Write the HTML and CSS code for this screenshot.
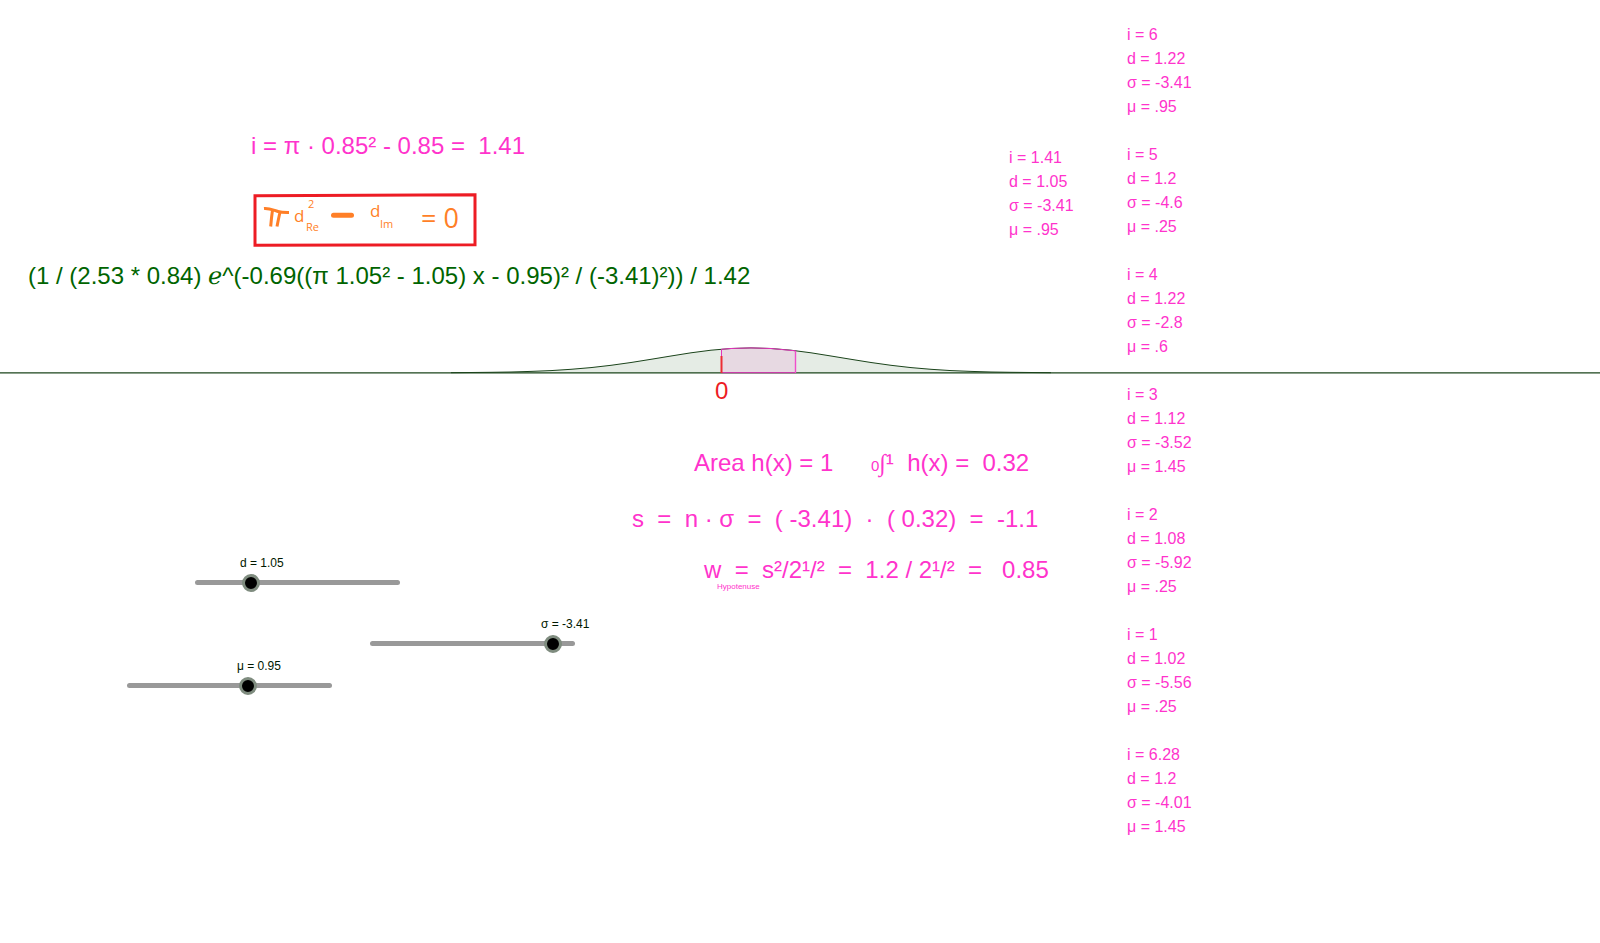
FILE: index.html
```
<!DOCTYPE html>
<html lang="en">
<head>
<meta charset="utf-8">
<title>Normal curve</title>
<link rel="stylesheet" href="styles.css">
</head>
<body>
<main class="board">
  <svg class="plot" aria-label="Bell curve h(x)">
    <path class="area" d="M451 32.7L471 32.5L491 32.3L511 32L531 31.4L551 30.6L571 29.3L591 27.6L611 25.3L631 22.5L651 19.3L671 16L691 12.8L711 10.2L731 8.5L751 7.9L771 8.5L791 10.2L811 12.8L831 16L851 19.3L871 22.5L891 25.3L911 27.6L931 29.3L951 30.6L971 31.4L991 32L1011 32.3L1031 32.5L1051 32.7"/>
    <line class="axis" x1="0" y1="32.8" x2="100%" y2="32.8"/>
    <path class="integral" d="M721.5 32.7V9.3L731 8.5L751 7.9L771 8.5L795.5 10.8V32.7Z"/>
    <line class="bound" x1="795.5" y1="11" x2="795.5" y2="33"/>
    <line class="origin" x1="721.5" y1="16" x2="721.5" y2="33"/>
  </svg>
  <p class="text zero">0</p>

  <p class="text index">i = π · 0.85² - 0.85 =  1.41</p>

  <svg class="condition" viewBox="0 0 224 54" role="img" aria-label="Condition">
    <path class="frame" d="M2 2.7L222 1.8V51.7L2 52.3Z"/>
    <path class="pen" d="M11 15.5C16 15 20 17 25 18.5C29 19.7 33 19.5 36 19.5M19.5 17L18.5 25L17.7 33.5M27 19L25.5 26L24 33.5"/>
    <path class="minus" d="M80.5 22.3H98.5"/>
    <text class="base" x="41" y="29">d</text>
    <text class="script" x="55" y="15">2</text>
    <text class="script" x="53" y="38">Re</text>
    <text class="base" x="117" y="24">d</text>
    <text class="script" x="127" y="35">Im</text>
    <text class="result" x="168" y="35">= 0</text>
  </svg>

  <p class="text formula">(1 / (2.53 * 0.84) <span class="euler">ℯ</span>^(-0.69((π 1.05² - 1.05) x - 0.95)² / (-3.41)²)) / 1.42</p>

  <p class="text total">Area h(x) = 1     <span class="limit"> 0</span><span class="sum">∫</span>¹  h(x) =  0.32</p>
  <p class="text side">s  =  n · σ  =  ( -3.41)  ·  ( 0.32)  =  -1.1</p>
  <p class="text hypotenuse">w  =  s²/2¹/²  =  1.2 / 2¹/²  =   0.85</p>
  <p class="note">Hypotenuse</p>

  <div class="slider slider-d">
    <label for="d">d = 1.05</label>
    <input id="d" type="range" min="0.8" max="1.8" step="0.01" value="1.05">
  </div>
  <div class="slider slider-sigma">
    <label for="sigma">σ = -3.41</label>
    <input id="sigma" type="range" min="-10" max="-2.9" step="0.01" value="-3.41">
  </div>
  <div class="slider slider-mu">
    <label for="mu">μ = 0.95</label>
    <input id="mu" type="range" min="0.35" max="1.35" step="0.01" value="0.95">
  </div>

  <div class="values current">
    <p>i = 1.41
d = 1.05
σ = -3.41
μ = .95</p>
  </div>
  <div class="values samples">
    <p>i = 6
d = 1.22
σ = -3.41
μ = .95</p>
    <p>i = 5
d = 1.2
σ = -4.6
μ = .25</p>
    <p>i = 4
d = 1.22
σ = -2.8
μ = .6</p>
    <p>i = 3
d = 1.12
σ = -3.52
μ = 1.45</p>
    <p>i = 2
d = 1.08
σ = -5.92
μ = .25</p>
    <p>i = 1
d = 1.02
σ = -5.56
μ = .25</p>
    <p>i = 6.28
d = 1.2
σ = -4.01
μ = 1.45</p>
  </div>
</main>
</body>
</html>
```
FILE: styles.css
```
* { box-sizing: border-box; }
body {
  margin: 0;
  background: #fff;
  font-family: "Liberation Sans", Arial, sans-serif;
}
p { margin: 0; white-space: pre; }

/* Free canvas: every object sits at its own place */
.board { position: relative; min-height: 100vh; overflow: hidden; }
.board > * { position: absolute; }

.plot { left: 0; top: 340px; width: 100%; height: 40px; }
.area { fill: rgba(0, 64, 0, 0.1); stroke: #1b441b; stroke-width: 1; }
.axis { stroke: #1b441b; stroke-width: 1.3; }
.integral { fill: rgba(255, 51, 204, 0.1); stroke: #e233bb; stroke-width: 1; }
.bound { stroke: #f04fcb; stroke-width: 1.4; }
.origin { stroke: #ed2c34; stroke-width: 2; }

.text { color: #ff33cc; font-size: 24px; line-height: 28px; }
.index { left: 251px; top: 132px; }
.formula { left: 28px; top: 262px; color: #006400; }
.zero { left: 715px; top: 377px; color: #ed1c24; }
.total { left: 694px; top: 449px; }
.side { left: 632px; top: 505px; }
.hypotenuse { left: 704px; top: 556px; }
.note { left: 717px; top: 582px; color: #ff33cc; font-size: 8px; line-height: 9px; }
.euler { font-family: "DejaVu Sans", sans-serif; line-height: 1; }
.limit { font-size: 15px; line-height: 1; }
.sum { font-family: "Liberation Serif", serif; line-height: 1; }

.condition { left: 253px; top: 193px; width: 224px; height: 54px; font-family: "Open Sans", sans-serif; }
.condition text { fill: #ff7f27; }
.frame { fill: none; stroke: #ed1c24; stroke-width: 3; }
.pen { fill: none; stroke: #ff7f27; stroke-width: 3; }
.minus { stroke: #ff7f27; stroke-width: 5; stroke-linecap: round; }
.base { font-size: 17px; }
.script { font-size: 11px; }
.result { font-size: 27px; }

.slider { display: flex; flex-direction: column; gap: 3px; width: 205px; color: #001800; font-size: 12px; line-height: 14px; }
.slider label { white-space: nowrap; }
.slider-d { left: 195px; top: 556px; }
.slider-d label { padding-left: 45px; }
.slider-sigma { left: 370px; top: 617px; }
.slider-sigma label { padding-left: 171px; }
.slider-mu { left: 127px; top: 659px; }
.slider-mu label { padding-left: 110px; }
.slider input { appearance: none; width: 100%; height: 18px; margin: 0; background: none; }
.slider input::-webkit-slider-runnable-track { height: 5px; border-radius: 3px; background: #999; }
.slider input::-webkit-slider-thumb {
  appearance: none;
  width: 18px;
  height: 18px;
  margin-top: -6px;
  border: 3px solid #7f8c7f;
  border-radius: 50%;
  background: #000;
}

.values { display: flex; flex-direction: column; gap: 24px; color: #ff33cc; font-size: 16px; line-height: 24px; }
.current { left: 1009px; top: 146px; }
.samples { left: 1127px; top: 23px; }
```
